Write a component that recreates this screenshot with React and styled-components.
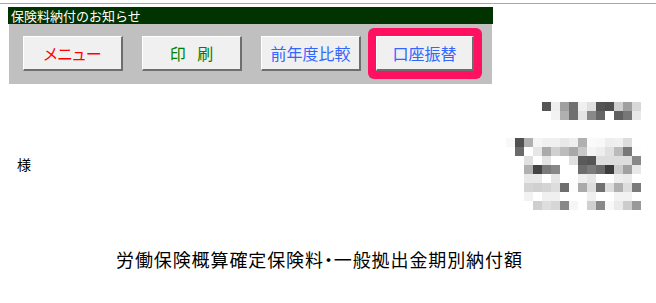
import React from 'react';
import styled, { createGlobalStyle } from 'styled-components';

const GlobalStyle = createGlobalStyle`
  html, body {
    margin: 0;
    padding: 0;
    background: #ffffff;
  }
  body {
    font-family: "Noto Sans CJK JP", "Liberation Sans", sans-serif;
  }
`;

const Page = styled.div`
  width: 656px;
  height: 303px;
  padding-top: 3px;
  box-sizing: border-box;
  overflow: hidden;
`;

const TopRule = styled.div`
  height: 1px;
  background: #a8a8a8;
  margin-bottom: 3px;
`;

const TitleBar = styled.div`
  margin-left: 8px;
  width: 485px;
  height: 17px;
  background: #003300;
  color: #ffffff;
  font-size: 13px;
  line-height: 17px;
  padding-left: 3px;
  box-sizing: border-box;
  white-space: nowrap;
`;

const Toolbar = styled.div`
  margin-left: 9px;
  width: 483px;
  height: 60px;
  background: #c0c0c0;
  display: flex;
  align-items: center;
  gap: 19px;
  padding: 0 0 1px 14px;
  box-sizing: border-box;
`;

const Button = styled.button`
  width: ${p => p.$w || 100}px;
  height: 35px;
  background: #f0f0f0;
  border-top: 1px solid #ffffff;
  border-left: 1px solid #ffffff;
  border-right: 2px solid #6e6e6e;
  border-bottom: 2px solid #6e6e6e;
  padding: 0;
  margin: 0;
  box-sizing: border-box;
  color: ${p => p.$color};
  font-family: "Noto Sans CJK JP", sans-serif;
  font-size: 16px;
  line-height: 32px;
  font-feature-settings: "palt";
  word-spacing: ${p => p.$spread || 0}px;
  cursor: pointer;
`;

const Highlight = styled.div`
  margin-left: -12px;
  padding: 8px;
  background: #ff1060;
  border-radius: 6px;
  display: flex;
`;

const Body = styled.div`
  padding-right: 15px;
`;

const MosaicRow = styled.div`
  display: flex;
  justify-content: flex-end;
  margin-top: 18px;
`;

const SplitRow = styled.div`
  display: flex;
  justify-content: space-between;
  align-items: flex-start;
  margin-top: 18px;
`;

const Addressee = styled.div`
  margin: 18px 0 0 17px;
  font-size: 14px;
  line-height: 16px;
  color: #000000;
`;

const Grid = styled.div`
  display: grid;
  grid-template-columns: repeat(${p => p.$cols}, 9px);
  grid-auto-rows: 9px;
`;

const Cell = styled.span`
  background: ${p => p.$c};
`;

const Heading = styled.div`
  margin: 38px 0 0 116px;
  font-size: 18px;
  line-height: 22px;
  letter-spacing: 0.9px;
  font-feature-settings: "palt";
  color: #000000;
  white-space: nowrap;
`;

const W = '#ffffff';

const senderBlock = [
  ['#555555', '#eeeeee', '#a0a0a0', '#707070', '#f0f0f0', '#e0e0e0', '#555555', '#505050', '#d0d0d0', '#a0a0a0', '#d8d8d8'],
  [W, '#f2f2f2', '#b0b0b0', '#707070', '#e4e4e4', '#888888', '#666666', W, '#606060', '#777777', '#e8e8e8'],
];

const addressBlock = [
  ['#f8f8f8', '#505050', '#b0b0b0', '#f5f5f5', '#f0f0f0', '#f0f0f0', '#e8e8e8', '#eeeeee', '#b0b0b0', '#fafafa', '#f8f8f8', '#eeeeee', '#f0f0f0', '#dddddd', W],
  [W, '#6a6a6a', W, '#e6e6e6', '#aaaaaa', '#d0d0d0', '#bcbcbc', '#a8a8a8', '#c8c8c8', '#f4f4f4', '#eeeeee', '#e0e0e0', '#bbbbbb', '#777777', '#fdfdfd'],
  [W, W, '#e0e0e0', W, '#e4e4e4', W, W, '#e0e0e0', '#5a5a5a', '#555555', '#dddddd', '#dddddd', '#dddddd', '#dddddd', '#888888'],
  [W, W, '#b0b0b0', '#444444', '#7a7a7a', '#888888', W, W, '#6c6c6c', '#7a7a7a', '#6a6a6a', '#3c3c3c', '#cccccc', '#a0a0a0', '#e8e8e8'],
  [W, W, '#e8e8e8', '#e8e8e8', W, '#e6e6e6', W, W, '#eeeeee', '#e6e6e6', W, W, '#eeeeee', '#eaeaea', W],
  [W, W, '#d4d4d4', '#d0d0d0', '#d4d4d4', '#dddddd', '#6e6e6e', '#fdfdfd', '#aaaaaa', '#dddddd', '#707070', '#dddddd', '#b0b0b0', '#dddddd', '#7a7a7a'],
  [W, W, '#f2f2f2', W, '#f0f0f0', '#f0f0f0', W, W, W, '#f0f0f0', W, W, '#f2f2f2', '#f2f2f2', W],
  [W, W, W, '#cfcfcf', '#dedede', '#d6d6d6', '#888888', '#f6f6f6', W, '#d0d0d0', '#888888', '#f8f8f8', '#eaeaea', '#cccccc', '#999999'],
];

function Mosaic({ rows }) {
  return (
    <Grid $cols={rows[0].length}>
      {rows.flat().map((c, i) => (
        <Cell key={i} $c={c} />
      ))}
    </Grid>
  );
}

export default function App() {
  return (
    <Page>
      <GlobalStyle />
      <TopRule />
      <TitleBar>保険料納付のお知らせ</TitleBar>
      <Toolbar>
        <Button $color="#ff0000">メニュー</Button>
        <Button $color="#008000" $spread={8}>印 刷</Button>
        <Button $color="#3366ff">前年度比較</Button>
        <Highlight>
          <Button $color="#3366ff" $w={98}>口座振替</Button>
        </Highlight>
      </Toolbar>
      <Body>
        <MosaicRow>
          <Mosaic rows={senderBlock} />
        </MosaicRow>
        <SplitRow>
          <Addressee>様</Addressee>
          <Mosaic rows={addressBlock} />
        </SplitRow>
      </Body>
      <Heading>労働保険概算確定保険料・一般拠出金期別納付額</Heading>
    </Page>
  );
}
